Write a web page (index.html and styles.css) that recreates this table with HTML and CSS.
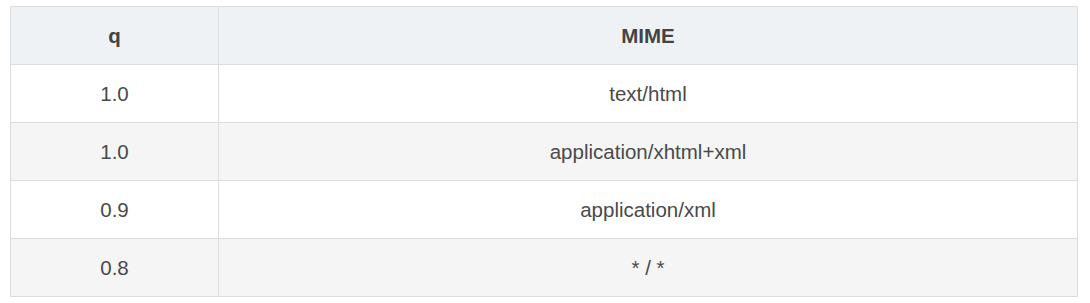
FILE: index.html
```html
<!DOCTYPE html>
<html>
<head>
<meta charset="utf-8">
<link rel="stylesheet" href="styles.css">
</head>
<body>
<table class="mime-table">
  <colgroup>
    <col class="col-q">
    <col class="col-mime">
  </colgroup>
  <thead>
    <tr><th>q</th><th>MIME</th></tr>
  </thead>
  <tbody>
    <tr><td>1.0</td><td>text/html</td></tr>
    <tr><td>1.0</td><td>application/xhtml+xml</td></tr>
    <tr><td>0.9</td><td>application/xml</td></tr>
    <tr><td>0.8</td><td>* / *</td></tr>
  </tbody>
</table>
</body>
</html>
```
FILE: styles.css
```css
html, body {
  margin: 0;
  background: #ffffff;
}
body {
  padding: 6px 0 0 10px;
  font-family: "Liberation Sans", Arial, sans-serif;
}
.mime-table {
  border-collapse: collapse;
  width: 1068px;
  table-layout: fixed;
  font-size: 20.5px;
  color: #4a4a4a;
}
.col-q { width: 208px; }
.mime-table th,
.mime-table td {
  border: 1px solid #dddddd;
  height: 57px;
  padding: 0;
  text-align: center;
  vertical-align: middle;
}
.mime-table th {
  background: #eff2f5;
  font-weight: bold;
  color: #444444;
}
.mime-table tbody tr:nth-child(even) td {
  background: #f5f5f5;
}
```
